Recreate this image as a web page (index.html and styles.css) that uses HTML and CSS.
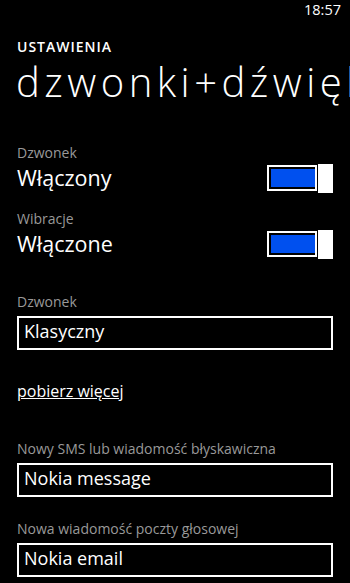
FILE: index.html
```html
<!DOCTYPE html>
<html lang="pl">
<head>
<meta charset="utf-8">
<link rel="stylesheet" href="styles.css">
</head>
<body>
<div class="phone">
  <div class="status"><span class="time">18:57</span></div>
  <header class="header">
    <div class="app-title">USTAWIENIA</div>
    <h1 class="page-title">dzwonki+dźwięki</h1>
  </header>
  <main class="content">
    <section class="toggle-group">
      <div class="label">Dzwonek</div>
      <div class="toggle-row">
        <span class="value">Włączony</span>
        <span class="toggle"><span class="track"><span class="fill"></span></span><span class="thumb"></span></span>
      </div>
    </section>
    <section class="toggle-group second">
      <div class="label">Wibracje</div>
      <div class="toggle-row">
        <span class="value">Włączone</span>
        <span class="toggle"><span class="track"><span class="fill"></span></span><span class="thumb"></span></span>
      </div>
    </section>
    <section class="picker-group first-picker">
      <div class="label">Dzwonek</div>
      <div class="picker">Klasyczny</div>
    </section>
    <a class="more-link" href="#">pobierz więcej</a>
    <section class="picker-group sms-picker">
      <div class="label">Nowy SMS lub wiadomość błyskawiczna</div>
      <div class="picker">Nokia message</div>
    </section>
    <section class="picker-group voice-picker">
      <div class="label">Nowa wiadomość poczty głosowej</div>
      <div class="picker">Nokia email</div>
    </section>
  </main>
</div>
</body>
</html>
```
FILE: styles.css
```css
html, body {
  margin: 0;
  padding: 0;
  background: #000;
}

.phone {
  width: 350px;
  height: 583px;
  overflow: hidden;
  background: #000;
  color: #fff;
  font-family: "Open Sans", "Noto Sans", sans-serif;
}

.status {
  height: 38px;
  display: flex;
  justify-content: flex-end;
  padding-right: 9px;
}

.time {
  font-size: 14.5px;
  line-height: 20px;
}

.header {
  padding-left: 17px;
}

.app-title {
  font-size: 14px;
  font-weight: 600;
  letter-spacing: 1px;
  line-height: 18px;
  padding-bottom: 2px;
}

.page-title {
  margin: 0 0 0 -1px;
  font-size: 40px;
  font-weight: 300;
  letter-spacing: 4.5px;
  line-height: 48px;
  white-space: nowrap;
}

.content {
  padding: 38px 17px 0;
  display: flex;
  flex-direction: column;
}

.label {
  font-size: 14px;
  line-height: 18px;
  color: #999;
}

.toggle-row {
  margin-top: 2px;
  height: 28px;
  display: flex;
  justify-content: space-between;
  align-items: center;
}

.value {
  font-size: 21.5px;
  line-height: 28px;
}

.toggle {
  display: flex;
  align-items: center;
}

.track {
  width: 50px;
  height: 26px;
  box-sizing: border-box;
  border: 2px solid #fff;
  padding: 2px 0 2px 2px;
  display: flex;
}

.fill {
  flex: 1;
  background: #0050ef;
}

.thumb {
  width: 15px;
  height: 29px;
  margin-left: 1px;
  background: #fff;
}

.second {
  margin-top: 18px;
}

.first-picker {
  margin-top: 35px;
}

.picker {
  margin-top: 5px;
  height: 34px;
  box-sizing: border-box;
  border: 2px solid #fff;
  padding: 0 5px 4px;
  font-size: 18px;
  line-height: 26px;
}

.more-link {
  margin-top: 30px;
  align-self: flex-start;
  color: #fff;
  font-size: 16px;
  line-height: 22px;
  text-decoration: underline;
}

.sms-picker {
  margin-top: 38px;
}

.voice-picker {
  margin-top: 23px;
}
```
